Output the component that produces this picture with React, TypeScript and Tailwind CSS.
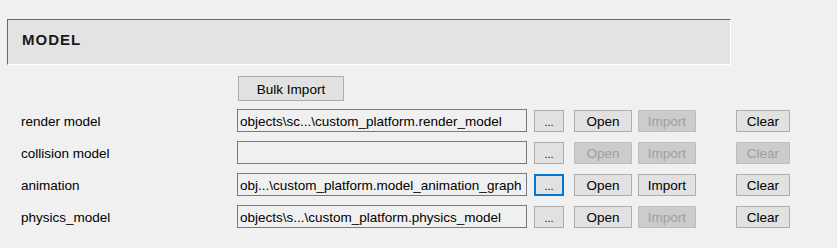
const rows = [
  {
    label: "render model",
    path: "objects\\sc...\\custom_platform.render_model",
    open: true,
    imp: false,
    clear: true,
    focus: false,
  },
  { label: "collision model", path: "", open: false, imp: false, clear: false, focus: false },
  {
    label: "animation",
    path: "obj...\\custom_platform.model_animation_graph",
    open: true,
    imp: true,
    clear: true,
    focus: true,
  },
  {
    label: "physics_model",
    path: "objects\\s...\\custom_platform.physics_model",
    open: true,
    imp: false,
    clear: true,
    focus: false,
  },
];

function WinButton({
  label,
  enabled = true,
  focus = false,
  className = "",
}: {
  label: string;
  enabled?: boolean;
  focus?: boolean;
  className?: string;
}) {
  const look = !enabled
    ? "border border-[#bfbfbf] bg-[#cccccc] text-[#a0a0a0]"
    : focus
    ? "border-2 border-[#0078d7] bg-[#e1e1e1] text-black"
    : "border border-[#adadad] bg-[#e1e1e1] text-black";
  return (
    <button
      disabled={!enabled}
      className={`flex items-center justify-center pt-[2px] leading-none ${look} ${className}`}
    >
      {label}
    </button>
  );
}

export default function App() {
  return (
    <div className="h-[248px] w-[837px] bg-[#f0f0f0] pt-[19px] font-['Liberation_Sans',Arial,sans-serif] text-[13.5px] text-black">
      <div className="ml-[7px] h-[46px] w-[724px] border border-l-[#696969] border-t-[#696969] border-b-white border-r-white bg-[#e3e3e3] pl-[14px] pt-[11px]">
        <span className="text-[15px] font-bold leading-[15px] tracking-[1px] text-[#1a1a1a]">MODEL</span>
      </div>

      <div className="mt-[11px] pl-[238px]">
        <WinButton label="Bulk Import" className="h-[25px] w-[106px]" />
      </div>

      <div className="mt-[4px] flex flex-col">
        {rows.map((r) => (
          <div key={r.label} className="flex h-[32px] items-start pt-[4px]">
            <div className="h-[23px] w-[237px] pl-[21px] leading-[25px]">{r.label}</div>
            <div className="h-[23px] w-[290px] truncate border border-[#7a7a7a] bg-[#f0f0f0] pl-[2px] leading-[23px]">
              {r.path}
            </div>
            <WinButton
              label="..."
              focus={r.focus}
              className="ml-[7px] mt-[1px] h-[22px] w-[30px] text-[11px]"
            />
            <WinButton label="Open" enabled={r.open} className="ml-[10px] mt-[1px] h-[22px] w-[58px]" />
            <WinButton label="Import" enabled={r.imp} className="ml-[6px] mt-[1px] h-[22px] w-[58px]" />
            <WinButton label="Clear" enabled={r.clear} className="ml-[40px] mt-[1px] h-[22px] w-[54px]" />
          </div>
        ))}
      </div>
    </div>
  );
}
